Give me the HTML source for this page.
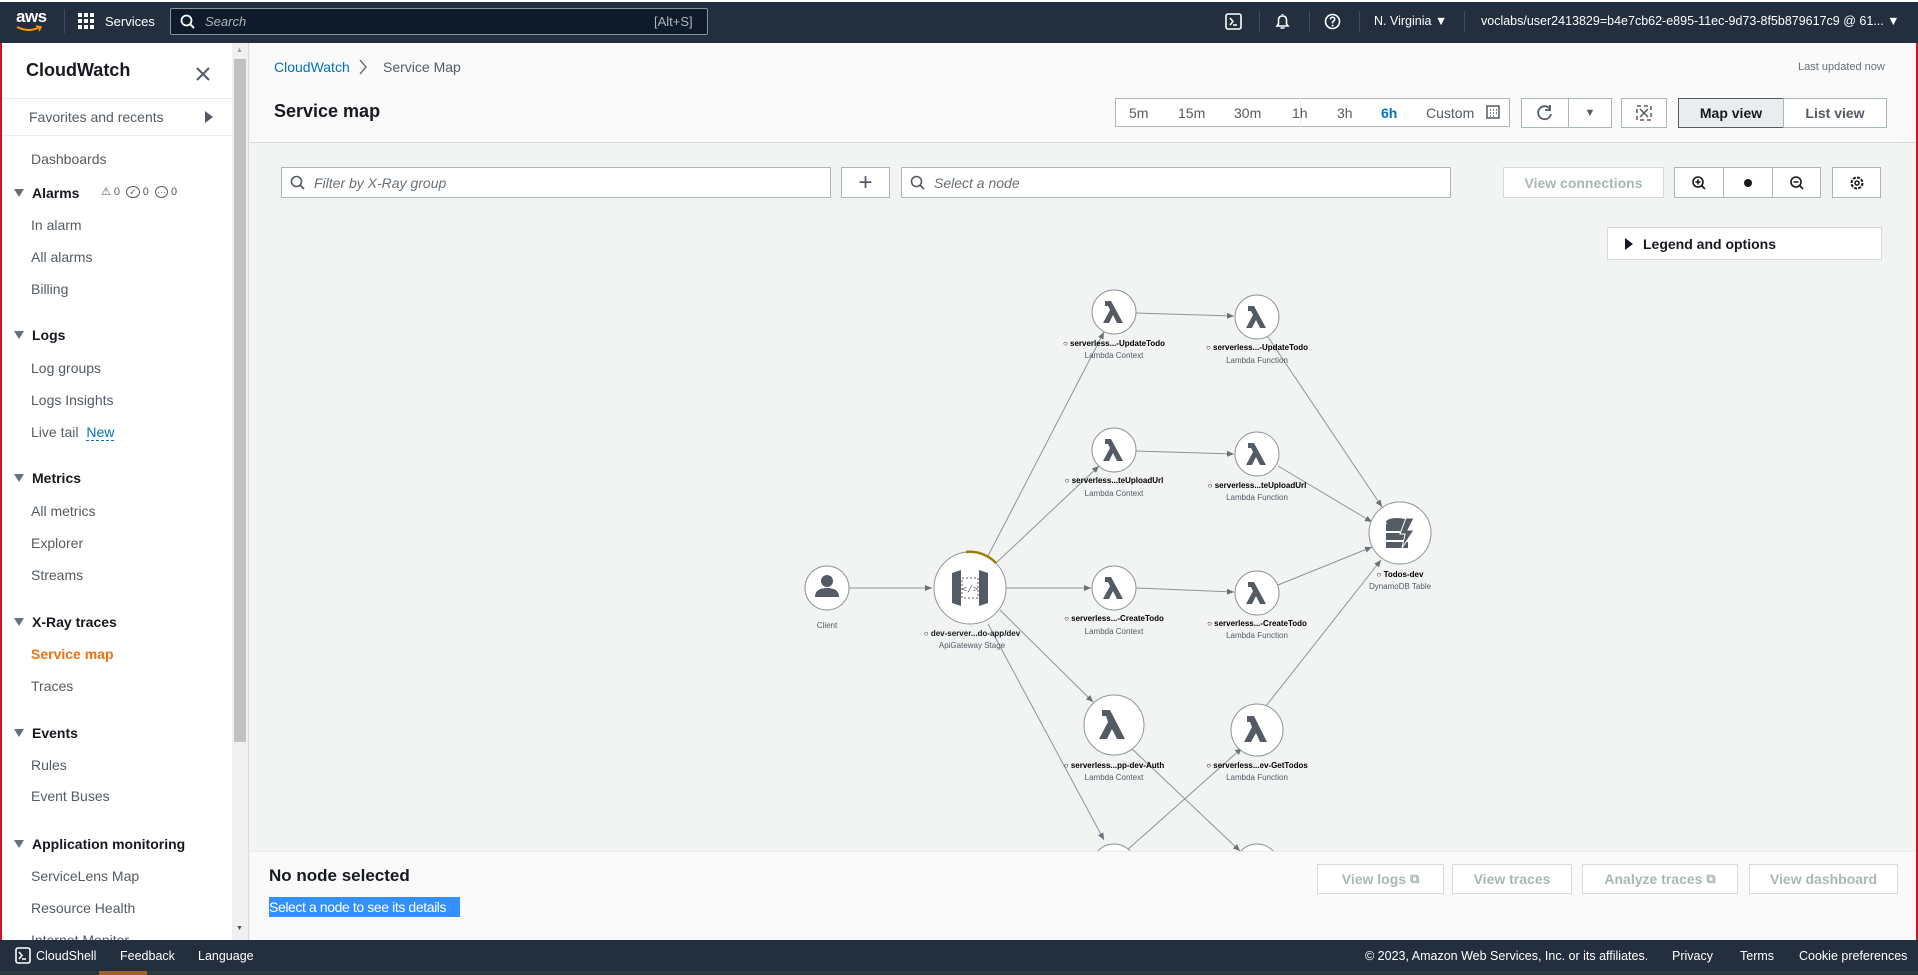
<!DOCTYPE html>
<html><head><meta charset="utf-8"><style>
*{box-sizing:border-box;margin:0;padding:0}
body{width:1918px;height:975px;overflow:hidden;font-family:"Liberation Sans",sans-serif;color:#16191f;background:#f2f3f3;position:relative}
.a{position:absolute;white-space:nowrap}
.top{left:0;top:0;width:1918px;height:43px;background:#232f3e;border-top:2px solid #fff}
.tw{color:#fff;font-size:13px}
.side{left:0;top:43px;width:232px;height:897px;background:#fff;border-left:2px solid #d0142a}
.sb{left:232px;top:43px;width:17px;height:897px;background:#f0f0f0;border-right:1px solid #d5dbdb}
.it{font-size:14px;color:#545b64;left:31px}
.hd{font-size:14px;font-weight:bold;color:#16191f;left:32px}
.tri{left:14px;width:0;height:0;border-left:5px solid transparent;border-right:5px solid transparent;border-top:8px solid #687078}
.btn{background:#fff;border:1px solid #aab7b8;font-size:14px;display:flex;align-items:center;justify-content:center;color:#545b64}
.dis{color:#aab7b8;border-color:#d5dbdb;font-weight:bold}
.nl{font-size:8px;font-weight:bold;color:#16191f;text-align:center;width:160px}
.ns{font-size:8px;color:#545b64;text-align:center;width:160px}
</style></head><body>
<div class="a top"></div>
<div class="a tw" style="left:16px;top:7px;font-size:17px;font-weight:bold;letter-spacing:-0.5px">aws</div>
<svg class="a" style="left:16px;top:25px" width="26" height="8"><path d="M1 2 Q13 8 24 2" stroke="#ff9900" stroke-width="2" fill="none"/><path d="M20 1 L25 2 L23 6" stroke="#ff9900" stroke-width="1.5" fill="none"/></svg>
<div class="a" style="left:64px;top:9px;width:1px;height:24px;background:#414d5c"></div>
<svg class="a" style="left:78px;top:13px" width="16" height="16"><g fill="#fff"><rect x="0" y="0" width="4" height="4"/><rect x="6" y="0" width="4" height="4"/><rect x="12" y="0" width="4" height="4"/><rect x="0" y="6" width="4" height="4"/><rect x="6" y="6" width="4" height="4"/><rect x="12" y="6" width="4" height="4"/><rect x="0" y="12" width="4" height="4"/><rect x="6" y="12" width="4" height="4"/><rect x="12" y="12" width="4" height="4"/></g></svg>
<div class="a tw" style="left:105px;top:14px">Services</div>
<div class="a" style="left:170px;top:8px;width:538px;height:27px;background:#0f1b2a;border:1px solid #879596;border-radius:2px"></div>
<svg class="a" style="left:180px;top:14px" width="16" height="16"><circle cx="6.5" cy="6.5" r="5" stroke="#fff" stroke-width="1.8" fill="none"/><path d="M10 10 L14 14" stroke="#fff" stroke-width="2"/></svg>
<div class="a" style="left:205px;top:14px;color:#aab7b8;font-size:13px;font-style:italic">Search</div>
<div class="a" style="left:654px;top:14px;color:#aab7b8;font-size:13px">[Alt+S]</div>
<svg class="a" style="left:1225px;top:13px" width="17" height="17"><rect x="1" y="1" width="15" height="15" rx="2" stroke="#fff" stroke-width="1.6" fill="none"/><path d="M5 5 L8 8.5 L5 12 M8 12 H12" stroke="#fff" stroke-width="1.6" fill="none"/></svg>
<div class="a" style="left:1259px;top:11px;width:1px;height:21px;background:#414d5c"></div>
<svg class="a" style="left:1274px;top:12px" width="17" height="18"><path d="M8.5 2 L8.5 3 M3 14 L4.5 12 L4.5 8 Q4.5 4 8.5 4 Q12.5 4 12.5 8 L12.5 12 L14 14 Z M6.5 16 H10.5" stroke="#fff" stroke-width="1.6" fill="none"/></svg>
<div class="a" style="left:1309px;top:11px;width:1px;height:21px;background:#414d5c"></div>
<svg class="a" style="left:1324px;top:13px" width="17" height="17"><circle cx="8.5" cy="8.5" r="7" stroke="#fff" stroke-width="1.6" fill="none"/><path d="M6.3 6.5 Q6.5 4.3 8.6 4.3 Q10.8 4.4 10.7 6.4 Q10.6 8 8.6 8.8 V10.5" stroke="#fff" stroke-width="1.5" fill="none"/><circle cx="8.6" cy="12.6" r="1" fill="#fff"/></svg>
<div class="a" style="left:1359px;top:11px;width:1px;height:21px;background:#414d5c"></div>
<div class="a tw" style="left:1374px;top:14px;font-size:12.5px">N. Virginia ▼</div>
<div class="a" style="left:1464px;top:11px;width:1px;height:21px;background:#414d5c"></div>
<div class="a tw" style="left:1481px;top:14px;font-size:12.5px">voclabs/user2413829=b4e7cb62-e895-11ec-9d73-8f5b879617c9 @ 61... ▼</div>
<div class="a" style="right:0;top:43px;width:2px;height:897px;background:#d0142a"></div>

<!-- sidebar -->
<div class="a side"></div>
<div class="a" style="left:26px;top:60px;font-size:18px;font-weight:bold">CloudWatch</div>
<svg class="a" style="left:195px;top:66px" width="16" height="16"><path d="M2 2 L14 14 M14 2 L2 14" stroke="#545b64" stroke-width="2"/></svg>
<div class="a" style="left:2px;top:98px;width:230px;height:1px;background:#eaeded"></div>
<div class="a it" style="left:29px;top:109px;color:#545b64">Favorites and recents</div>
<div class="a" style="left:205px;top:111px;width:0;height:0;border-top:6px solid transparent;border-bottom:6px solid transparent;border-left:8px solid #545b64"></div>
<div class="a" style="left:2px;top:135px;width:230px;height:1px;background:#eaeded"></div>
<div class="a it" style="top:151px">Dashboards</div>
<div class="a tri" style="top:189px"></div><div class="a hd" style="top:185px">Alarms</div>
<div class="a" style="left:101px;top:185px;font-size:11px;color:#545b64">⚠ 0 &nbsp;<span style="border:1.5px solid #545b64;border-radius:50%;font-size:9px;padding:0 2px">✓</span> 0 &nbsp;<span style="border:1.5px solid #545b64;border-radius:50%;font-size:9px;padding:0 1px">⋯</span> 0</div>
<div class="a it" style="top:217px">In alarm</div>
<div class="a it" style="top:249px">All alarms</div>
<div class="a it" style="top:281px">Billing</div>
<div class="a tri" style="top:331px"></div><div class="a hd" style="top:327px">Logs</div>
<div class="a it" style="top:360px">Log groups</div>
<div class="a it" style="top:392px">Logs Insights</div>
<div class="a it" style="top:424px">Live tail <span style="color:#0073bb;border-bottom:1px dashed #0073bb;margin-left:4px">New</span></div>
<div class="a tri" style="top:474px"></div><div class="a hd" style="top:470px">Metrics</div>
<div class="a it" style="top:503px">All metrics</div>
<div class="a it" style="top:535px">Explorer</div>
<div class="a it" style="top:567px">Streams</div>
<div class="a tri" style="top:618px"></div><div class="a hd" style="top:614px">X-Ray traces</div>
<div class="a it" style="top:646px;color:#ec7211;font-weight:bold">Service map</div>
<div class="a it" style="top:678px">Traces</div>
<div class="a tri" style="top:729px"></div><div class="a hd" style="top:725px">Events</div>
<div class="a it" style="top:757px">Rules</div>
<div class="a it" style="top:788px">Event Buses</div>
<div class="a tri" style="top:840px"></div><div class="a hd" style="top:836px">Application monitoring</div>
<div class="a it" style="top:868px">ServiceLens Map</div>
<div class="a it" style="top:900px">Resource Health</div>
<div class="a it" style="top:932px">Internet Monitor</div>
<div class="a sb"></div>
<div class="a" style="left:234px;top:59px;width:12px;height:683px;background:#c1c1c1"></div>
<div class="a" style="left:236px;top:47px;font-size:7px;color:#a0a0a0">▲</div>
<div class="a" style="left:236px;top:925px;font-size:7px;color:#505050">▼</div>

<!-- header -->
<div class="a" style="left:250px;top:43px;width:1666px;height:100px;background:#fafafa;border-bottom:1px solid #d5dbdb"></div>
<div class="a" style="left:274px;top:59px;font-size:14px;color:#0073bb">CloudWatch</div>
<svg class="a" style="left:358px;top:59px" width="10" height="16"><path d="M2 1 L8 8 L2 15" stroke="#687078" stroke-width="1.5" fill="none"/></svg>
<div class="a" style="left:383px;top:59px;font-size:14px;color:#545b64">Service Map</div>
<div class="a" style="left:1798px;top:61px;font-size:11px;color:#687078">Last updated now</div>
<div class="a" style="left:274px;top:101px;font-size:18px;font-weight:bold">Service map</div>
<div class="a" style="left:1115px;top:98px;width:395px;height:29px;background:#fff;border:1px solid #aab7b8"></div>
<div class="a" style="left:1300px;top:98px;width:1px;height:29px;background:#eaeded"></div>
<div class="a" style="left:1129px;top:105px;font-size:14px;color:#545b64;word-spacing:0">5m</div>
<div class="a" style="left:1178px;top:105px;font-size:14px;color:#545b64">15m</div>
<div class="a" style="left:1234px;top:105px;font-size:14px;color:#545b64">30m</div>
<div class="a" style="left:1292px;top:105px;font-size:14px;color:#545b64">1h</div>
<div class="a" style="left:1337px;top:105px;font-size:14px;color:#545b64">3h</div>
<div class="a" style="left:1381px;top:105px;font-size:14px;color:#0073bb;font-weight:bold">6h</div>
<div class="a" style="left:1426px;top:105px;font-size:14px;color:#545b64">Custom</div>
<svg class="a" style="left:1486px;top:105px" width="14" height="14"><rect x="1" y="1" width="12" height="12" fill="none" stroke="#545b64" stroke-width="1.5"/><path d="M4 5h1M7 5h1M10 5h1M4 8h1M7 8h1M10 8h1M4 11h1M7 11h1" stroke="#545b64" stroke-width="1.5"/></svg>
<div class="a btn" style="left:1521px;top:98px;width:48px;height:30px"><svg width="18" height="18"><path d="M14 5 A6.5 6.5 0 1 0 15 10" stroke="#545b64" stroke-width="1.8" fill="none"/><path d="M14 1 V6 H9" stroke="#545b64" stroke-width="1.8" fill="none"/></svg></div>
<div class="a btn" style="left:1568px;top:98px;width:44px;height:30px;font-size:11px">▼</div>
<div class="a btn" style="left:1621px;top:98px;width:46px;height:30px"><svg width="16" height="16"><rect x="1" y="1" width="14" height="14" fill="none" stroke="#545b64" stroke-width="1.5" stroke-dasharray="4 3"/><path d="M4 4 L12 12 M12 4 L4 12" stroke="#545b64" stroke-width="1.5"/></svg></div>
<div class="a btn" style="left:1678px;top:98px;width:106px;height:30px;background:#eaeded;border-color:#545b64;color:#16191f;font-weight:bold">Map view</div>
<div class="a btn" style="left:1783px;top:98px;width:104px;height:30px;color:#545b64;font-weight:bold">List view</div>

<!-- toolbar -->
<div class="a" style="left:281px;top:167px;width:550px;height:31px;background:#fff;border:1px solid #aab7b8"></div>
<svg class="a" style="left:290px;top:175px" width="16" height="16"><circle cx="6.5" cy="6.5" r="5" stroke="#545b64" stroke-width="1.6" fill="none"/><path d="M10 10 L14 14" stroke="#545b64" stroke-width="1.8"/></svg>
<div class="a" style="left:314px;top:175px;font-size:14px;font-style:italic;color:#687078">Filter by X-Ray group</div>
<div class="a btn" style="left:841px;top:167px;width:49px;height:31px;font-size:24px;color:#545b64;font-weight:300">+</div>
<div class="a" style="left:901px;top:167px;width:550px;height:31px;background:#fff;border:1px solid #aab7b8"></div>
<svg class="a" style="left:910px;top:175px" width="16" height="16"><circle cx="6.5" cy="6.5" r="5" stroke="#545b64" stroke-width="1.6" fill="none"/><path d="M10 10 L14 14" stroke="#545b64" stroke-width="1.8"/></svg>
<div class="a" style="left:934px;top:175px;font-size:14px;font-style:italic;color:#687078">Select a node</div>
<div class="a btn dis" style="left:1503px;top:167px;width:161px;height:31px">View connections</div>
<div class="a btn" style="left:1674px;top:167px;width:50px;height:31px"><svg width="16" height="16"><circle cx="7" cy="7" r="5" stroke="#16191f" stroke-width="1.6" fill="none"/><path d="M10.5 10.5 L14 14 M4.5 7h5M7 4.5v5" stroke="#16191f" stroke-width="1.6"/></svg></div>
<div class="a btn" style="left:1723px;top:167px;width:50px;height:31px"><div style="width:8px;height:8px;border-radius:50%;background:#16191f"></div></div>
<div class="a btn" style="left:1772px;top:167px;width:49px;height:31px"><svg width="16" height="16"><circle cx="7" cy="7" r="5" stroke="#16191f" stroke-width="1.6" fill="none"/><path d="M10.5 10.5 L14 14 M4.5 7h5" stroke="#16191f" stroke-width="1.6"/></svg></div>
<div class="a btn" style="left:1832px;top:167px;width:49px;height:31px"><svg width="16" height="16"><circle cx="8" cy="8" r="5.5" stroke="#16191f" stroke-width="2" fill="none" stroke-dasharray="3 1.3"/><circle cx="8" cy="8" r="2" stroke="#16191f" stroke-width="1.5" fill="none"/></svg></div>
<div class="a" style="left:1607px;top:227px;width:275px;height:33px;background:#fff;border:1px solid #d5dbdb"></div>
<div class="a" style="left:1625px;top:238px;width:0;height:0;border-top:6px solid transparent;border-bottom:6px solid transparent;border-left:8px solid #16191f"></div>
<div class="a" style="left:1643px;top:236px;font-size:14px;font-weight:bold;color:#16191f">Legend and options</div>

<!-- graph -->
<svg class="a" style="left:0;top:0" width="1918" height="851">
<defs><marker id="ar" markerWidth="8" markerHeight="8" refX="7" refY="3" orient="auto"><path d="M0 0 L7 3 L0 6 Z" fill="#687078"/></marker></defs>
<g stroke="#8d9596" stroke-width="1" fill="none" marker-end="url(#ar)">
<line x1="849" y1="588" x2="932" y2="588"/>
<line x1="988" y1="556" x2="1104" y2="332"/>
<line x1="996" y1="563" x2="1099" y2="466"/>
<line x1="1006" y1="588" x2="1091" y2="588"/>
<line x1="1000" y1="610" x2="1093" y2="702"/>
<line x1="988" y1="624" x2="1104" y2="840"/>
<line x1="1136" y1="313" x2="1234" y2="316"/>
<line x1="1136" y1="451" x2="1234" y2="454"/>
<line x1="1136" y1="588" x2="1234" y2="592"/>
<line x1="1268" y1="337" x2="1382" y2="507"/>
<line x1="1278" y1="466" x2="1372" y2="522"/>
<line x1="1278" y1="585" x2="1372" y2="547"/>
<line x1="1266" y1="706" x2="1381" y2="560"/>
<line x1="1129" y1="746" x2="1240" y2="851"/>
<line x1="1126" y1="851" x2="1242" y2="748"/>
</g>
<g fill="#fff" stroke="#8d9596" stroke-width="1">
<circle cx="827" cy="588" r="22"/>
<circle cx="970" cy="588" r="36"/>
<circle cx="1114" cy="312" r="22"/><circle cx="1257" cy="317" r="22"/>
<circle cx="1114" cy="450" r="22"/><circle cx="1257" cy="454" r="22"/>
<circle cx="1114" cy="588" r="22"/><circle cx="1257" cy="593" r="22"/>
<circle cx="1400" cy="533" r="31"/>
<circle cx="1114" cy="725" r="30"/><circle cx="1257" cy="730" r="26"/>
<circle cx="1114" cy="866" r="22"/><circle cx="1257" cy="866" r="22"/>
</g>
<path d="M966 552 A36 36 0 0 1 996 563" stroke="#a07b00" stroke-width="2.5" fill="none"/>
<g fill="#545b64">
<circle cx="827" cy="581" r="6"/><path d="M815 597 Q815 588 827 588 Q839 588 839 597 Z"/>
<path d="M952 573 L961 570 V606 L952 603 Z M988 573 L979 570 V606 L988 603 Z"/>
<rect x="962" y="578" width="16" height="20" fill="none" stroke="#545b64" stroke-dasharray="2 2"/>
<text x="970" y="592" font-size="9" text-anchor="middle" font-family="Liberation Mono">&lt;/&gt;</text>
</g>
<g fill="#545b64" id="lam">
<path d="M1105 301 h6 l12 22 h-6 l-4 -8 l-4 8 h-6 l7 -13 l-2 -4 h-3z"/>
<path d="M1248 306 h6 l12 22 h-6 l-4 -8 l-4 8 h-6 l7 -13 l-2 -4 h-3z"/>
<path d="M1105 439 h6 l12 22 h-6 l-4 -8 l-4 8 h-6 l7 -13 l-2 -4 h-3z"/>
<path d="M1248 443 h6 l12 22 h-6 l-4 -8 l-4 8 h-6 l7 -13 l-2 -4 h-3z"/>
<path d="M1105 577 h6 l12 22 h-6 l-4 -8 l-4 8 h-6 l7 -13 l-2 -4 h-3z"/>
<path d="M1248 582 h6 l12 22 h-6 l-4 -8 l-4 8 h-6 l7 -13 l-2 -4 h-3z"/>
<path d="M1102 710 h8 l15 29 h-8 l-5 -10 l-5 10 h-8 l9 -17 l-2 -6 h-4z"/>
<path d="M1247 716 h7 l13 26 h-7 l-4 -9 l-5 9 h-7 l8 -15 l-2 -5 h-3z"/>
</g>
<g fill="#545b64"><ellipse cx="1397" cy="522" rx="11" ry="4"/><rect x="1386" y="524" width="22" height="7"/><rect x="1386" y="533" width="22" height="7"/><rect x="1386" y="542" width="22" height="6"/><path d="M1406 518 L1414 518 L1408 530 L1414 530 L1402 548 L1405 534 L1400 534 Z" fill="#545b64" stroke="#fff" stroke-width="1"/></g>
<g font-family="Liberation Sans" text-anchor="middle">
<text x="827" y="628" font-size="8" fill="#545b64">Client</text>
<text x="972" y="636" font-size="8" font-weight="bold" fill="#16191f">○ dev-server...do-app/dev</text>
<text x="972" y="648" font-size="8" fill="#545b64">ApiGateway Stage</text>
<text x="1114" y="346" font-size="8" font-weight="bold">○ serverless...-UpdateTodo</text><text x="1114" y="358" font-size="8" fill="#545b64">Lambda Context</text>
<text x="1257" y="350" font-size="8" font-weight="bold">○ serverless...-UpdateTodo</text><text x="1257" y="363" font-size="8" fill="#545b64">Lambda Function</text>
<text x="1114" y="483" font-size="8" font-weight="bold">○ serverless...teUploadUrl</text><text x="1114" y="496" font-size="8" fill="#545b64">Lambda Context</text>
<text x="1257" y="488" font-size="8" font-weight="bold">○ serverless...teUploadUrl</text><text x="1257" y="500" font-size="8" fill="#545b64">Lambda Function</text>
<text x="1114" y="621" font-size="8" font-weight="bold">○ serverless...-CreateTodo</text><text x="1114" y="634" font-size="8" fill="#545b64">Lambda Context</text>
<text x="1257" y="626" font-size="8" font-weight="bold">○ serverless...-CreateTodo</text><text x="1257" y="638" font-size="8" fill="#545b64">Lambda Function</text>
<text x="1400" y="577" font-size="8" font-weight="bold">○ Todos-dev</text><text x="1400" y="589" font-size="8" fill="#545b64">DynamoDB Table</text>
<text x="1114" y="768" font-size="8" font-weight="bold">○ serverless...pp-dev-Auth</text><text x="1114" y="780" font-size="8" fill="#545b64">Lambda Context</text>
<text x="1257" y="768" font-size="8" font-weight="bold">○ serverless...ev-GetTodos</text><text x="1257" y="780" font-size="8" fill="#545b64">Lambda Function</text>
</g>
</svg>

<!-- bottom panel -->
<div class="a" style="left:250px;top:851px;width:1666px;height:89px;background:#fafafa;border-top:1px solid #eaeded"></div>
<div class="a" style="left:269px;top:866px;font-size:17px;font-weight:bold">No node selected</div>
<div class="a" style="left:269px;top:897px;height:20px;width:191px;background:#3390ff"></div>
<div class="a" style="left:269px;top:899px;font-size:14px;color:#fff;letter-spacing:-0.4px">Select a node to see its details</div>
<div class="a btn dis" style="left:1317px;top:864px;width:127px;height:30px">View logs&nbsp;<span style="font-size:13px">⧉</span></div>
<div class="a btn dis" style="left:1452px;top:864px;width:120px;height:30px">View traces</div>
<div class="a btn dis" style="left:1582px;top:864px;width:156px;height:30px">Analyze traces&nbsp;<span style="font-size:13px">⧉</span></div>
<div class="a btn dis" style="left:1749px;top:864px;width:149px;height:30px">View dashboard</div>

<!-- footer -->
<div class="a" style="left:0;top:940px;width:1918px;height:31px;background:#232f3e"></div>
<div class="a" style="left:0;top:971px;width:1918px;height:4px;background:#2b3a3a"></div>
<div class="a" style="left:99px;top:971px;width:48px;height:4px;background:#a0622d"></div>
<svg class="a" style="left:15px;top:947px" width="16" height="17"><rect x="1" y="1" width="14" height="15" rx="2" stroke="#fff" stroke-width="1.6" fill="none"/><path d="M4 5 L7 8.5 L4 12 M7 12 H11" stroke="#fff" stroke-width="1.5" fill="none"/></svg>
<div class="a tw" style="left:36px;top:949px;font-size:12.5px">CloudShell</div>
<div class="a tw" style="left:120px;top:949px;font-size:12.5px">Feedback</div>
<div class="a tw" style="left:198px;top:949px;font-size:12.5px">Language</div>
<div class="a tw" style="left:1365px;top:949px;font-size:12.5px">© 2023, Amazon Web Services, Inc. or its affiliates.</div>
<div class="a tw" style="left:1672px;top:949px;font-size:12.5px">Privacy</div>
<div class="a tw" style="left:1740px;top:949px;font-size:12.5px">Terms</div>
<div class="a tw" style="left:1799px;top:949px;font-size:12.5px">Cookie preferences</div>
</body></html>
